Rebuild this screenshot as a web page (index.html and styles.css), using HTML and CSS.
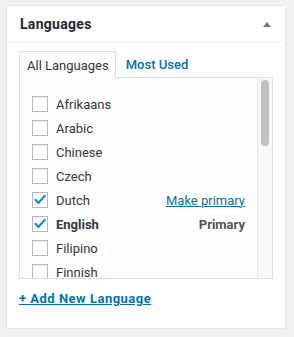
FILE: index.html
```html
<!DOCTYPE html>
<html>
<head>
<meta charset="utf-8">
<link rel="stylesheet" href="styles.css">
</head>
<body>
<div class="postbox">
  <div class="postbox-header">
    <h2 class="hndle">Languages</h2>
    <span class="toggle-arrow"></span>
  </div>
  <div class="inside">
    <ul class="tabs">
      <li class="tab active">All Languages</li>
      <li class="tab"><a href="#">Most Used</a></li>
    </ul>
    <div class="tab-panel">
      <ul class="lang-list">
        <li class="lang"><span class="cb"></span><span class="name">Afrikaans</span></li>
        <li class="lang"><span class="cb"></span><span class="name">Arabic</span></li>
        <li class="lang"><span class="cb"></span><span class="name">Chinese</span></li>
        <li class="lang"><span class="cb"></span><span class="name">Czech</span></li>
        <li class="lang"><span class="cb checked"><svg viewBox="0 0 16 16" width="16" height="16"><path d="M3.4 7.8 L6.4 11 L12.8 3.8" fill="none" stroke="#1e8cbe" stroke-width="2.2" stroke-linecap="round" stroke-linejoin="round"/></svg></span><span class="name">Dutch</span><a class="make-primary" href="#">Make primary</a></li>
        <li class="lang primary"><span class="cb checked"><svg viewBox="0 0 16 16" width="16" height="16"><path d="M3.4 7.8 L6.4 11 L12.8 3.8" fill="none" stroke="#1e8cbe" stroke-width="2.2" stroke-linecap="round" stroke-linejoin="round"/></svg></span><span class="name">English</span><span class="primary-label">Primary</span></li>
        <li class="lang"><span class="cb"></span><span class="name">Filipino</span></li>
        <li class="lang"><span class="cb"></span><span class="name">Finnish</span></li>
      </ul>
      <div class="scrollbar"><div class="thumb"></div></div>
    </div>
    <p class="adder"><a href="#">+ Add New Language</a></p>
  </div>
</div>
</body>
</html>
```

FILE: styles.css
```css
html, body {
  margin: 0;
  padding: 0;
  background: #f1f1f1;
}
body {
  padding: 5px 8px 0 6px;
  font-family: Roboto, "Open Sans", "Liberation Sans", sans-serif;
  font-size: 13px;
  color: #32373c;
}
.postbox {
  width: 280px;
  height: 324px;
  box-sizing: border-box;
  background: #fff;
  border: 1px solid #e5e5e5;
  box-shadow: 0 1px 1px rgba(0,0,0,0.04);
}
.postbox-header {
  height: 35px;
  border-bottom: 1px solid #eee;
  display: flex;
  align-items: center;
  justify-content: space-between;
  padding: 0 14px 0 13px;
}
.hndle {
  margin: 0;
  font-size: 14px;
  font-weight: 700;
  color: #23282d;
  line-height: 1;
  letter-spacing: 0.3px;
}
.toggle-arrow {
  width: 0;
  height: 0;
  border-left: 4px solid transparent;
  border-right: 4px solid transparent;
  border-bottom: 5px solid #72777c;
  margin-top: 1px;
}
.inside {
  padding: 9px 12px 0 12px;
}
.tabs {
  list-style: none;
  margin: 0;
  padding: 0;
  display: flex;
  position: relative;
  z-index: 1;
}
.tab {
  height: 25px;
  display: flex;
  align-items: center;
  padding: 0 6px 0 7px;
  border: 1px solid transparent;
  border-bottom: none;
}
.tab.active {
  border-color: #ddd;
  background: #fdfdfd;
  height: 26px;
  margin-bottom: -1px;
  color: #32373c;
}
.tab a {
  color: #0073aa;
  text-decoration: none;
  font-weight: 500;
  padding-left: 2px;
}
.tab-panel {
  border: 1px solid #ddd;
  background: #fdfdfd;
  height: 200px;
  width: 252px;
  display: flex;
  overflow: hidden;
}
.lang-list {
  list-style: none;
  margin: 0;
  padding: 18px 12px 0 12px;
  flex: 1;
  overflow: hidden;
}
.scrollbar {
  width: 14px;
  flex: none;
  background: #f9f9f9;
  border-left: 1px solid #e6e6e6;
  padding-top: 2px;
}
.thumb {
  width: 8px;
  height: 66px;
  margin-left: 3px;
  border-radius: 4px;
  background: #c1c1c1;
}
.lang {
  height: 16px;
  margin-bottom: 8px;
  display: flex;
  align-items: center;
}
.cb {
  width: 16px;
  height: 16px;
  box-sizing: border-box;
  border: 1px solid #b4b9be;
  background: #fff;
  box-shadow: inset 0 1px 2px rgba(0,0,0,0.07);
  flex: none;
  position: relative;
}
.cb svg {
  position: absolute;
  left: -1px;
  top: -1px;
}
.name {
  margin-left: 8px;
  flex: 1;
  color: #32373c;
}
.primary .name {
  font-weight: 700;
}
.make-primary {
  color: #0073aa;
  text-decoration: underline;
}
.primary-label {
  font-weight: 700;
  color: #555;
}
.adder {
  margin: 12px 0 0 0;
  font-weight: 700;
  letter-spacing: 0.5px;
}
.adder a {
  color: #0073aa;
  text-decoration: underline;
}
```
